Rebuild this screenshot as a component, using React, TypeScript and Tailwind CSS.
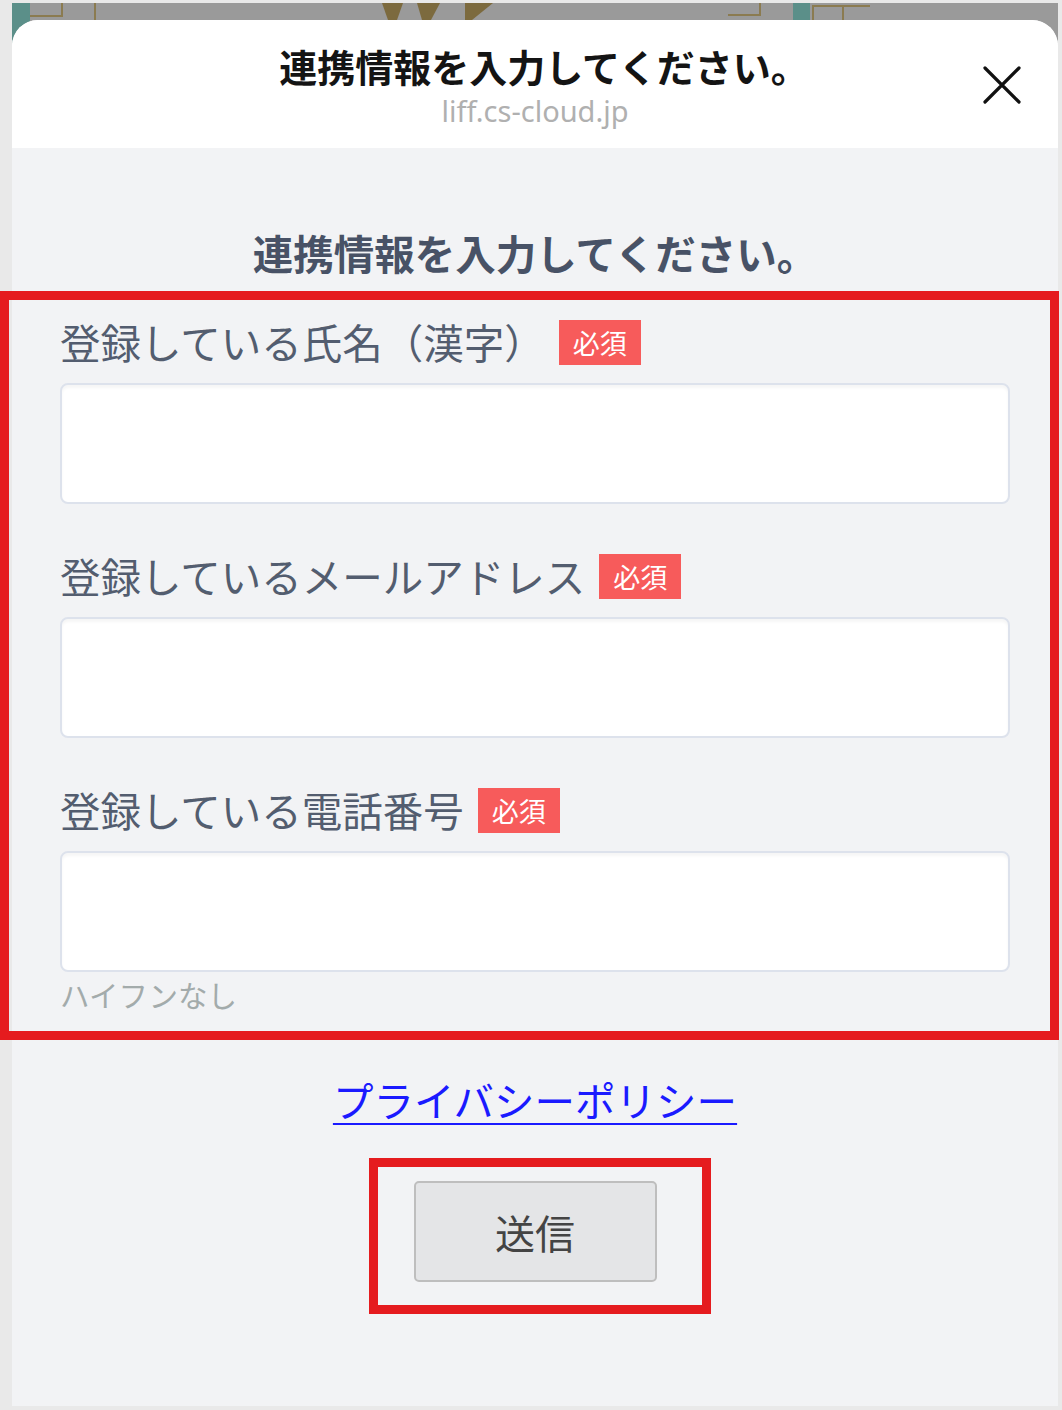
import React from 'react';

const jp = { fontFamily: '"Noto Sans CJK JP", "Noto Sans", sans-serif' };

const Badge: React.FC = () => (
  <span className="ml-[14px] inline-flex h-[45px] w-[82px] items-center justify-center bg-[#f75b5b] text-[27px] leading-none text-white">
    必須
  </span>
);

const Field: React.FC<{ label: string; hint?: string; first?: boolean }> = ({ label, hint, first }) => (
  <div className={first ? 'mt-[42px]' : 'mt-[48px]'}>
    <div className="flex h-[48px] items-center">
      <span className="text-[40.5px] leading-[48px] text-[#535d6f]">{label}</span>
      <Badge />
    </div>
    <div className="mt-[17px] h-[121px] w-full rounded-[8px] border-2 border-[#dde2ec] bg-white shadow-[inset_0_3px_3px_rgba(0,0,0,0.04)]" />
    {hint && <div className="mt-[5px] text-[29.5px] leading-[34px] text-[#a3abab]">{hint}</div>}
  </div>
);

const TopStrip: React.FC = () => (
  <svg width="1046" height="40" viewBox="0 0 1046 40" className="block">
    <rect width="1046" height="40" fill="#9a9a9a" />
    <rect x="0" y="0" width="18" height="40" fill="#5b8f89" />
    <path d="M18 13H50V0" stroke="#8b7b50" strokeWidth="2" fill="none" />
    <path d="M83 0V40" stroke="#8b7b50" strokeWidth="2" />
    <path d="M370 0H391L385 17H376Z" fill="#7c6a3e" />
    <path d="M405 0H428L419 17H410Z" fill="#7c6a3e" />
    <path d="M453 0H481L460 17H453Z" fill="#7c6a3e" />
    <path d="M716 12H748V0" stroke="#8b7b50" strokeWidth="2" fill="none" />
    <rect x="781" y="0" width="17" height="40" fill="#5b8f89" />
    <path d="M801 40V3H858M831 3V17" stroke="#8b7b50" strokeWidth="2" fill="none" />
  </svg>
);

export default function App() {
  return (
    <div className="relative h-[1410px] w-[1062px] overflow-hidden bg-[#e9e9e9] pb-[4px] pl-[12px] pr-[4px] pt-[3px]" style={jp}>
      <div className="flex h-full flex-col">
        <TopStrip />
        <div className="relative -mt-[23px] flex flex-1 flex-col overflow-hidden rounded-t-[26px] bg-[#f2f3f5]">
          {/* header */}
          <div className="relative flex h-[128px] flex-col items-center bg-white pt-[24px]">
            <div className="pl-[18px] text-[38px] font-bold leading-[44px] text-[#141414]">連携情報を入力してください。</div>
            <div className="mt-[5px] text-[29px] leading-[36px] text-[#b0b0b0]" style={{ fontFamily: '"Noto Sans", sans-serif' }}>
              liff.cs-cloud.jp
            </div>
            <button className="absolute right-[37px] top-[46px] h-[38px] w-[38px]">
              <svg viewBox="0 0 38 38" width="38" height="38">
                <path d="M2 2L36 36M36 2L2 36" stroke="#111" strokeWidth="3.2" strokeLinecap="round" />
              </svg>
            </button>
          </div>

          {/* body */}
          <div className="flex flex-col px-[48px] pt-[82px]">
            <div className="text-center text-[40.5px] font-bold leading-[46px] text-[#485266]">連携情報を入力してください。</div>
            <Field label="登録している氏名（漢字）" first />
            <Field label="登録しているメールアドレス" />
            <Field label="登録している電話番号" hint="ハイフンなし" />

            <div className="mt-[65px] text-center">
              <a className="text-[40.5px] leading-[48px] text-[#1a1aff] underline decoration-2 underline-offset-[6px]">
                プライバシーポリシー
              </a>
            </div>

            <div className="mt-[57px] flex justify-center">
              <button className="h-[101px] w-[243px] rounded-[5px] border-2 border-[#bebebe] bg-[#e4e5e7] text-[40px] leading-none text-[#444]">
                送信
              </button>
            </div>
          </div>
        </div>
      </div>

      {/* annotation boxes */}
      <div className="pointer-events-none absolute left-0 top-[291px] h-[749px] w-[1059px] border-[9px] border-[#e51b1e]" />
      <div className="pointer-events-none absolute left-[369px] top-[1158px] h-[156px] w-[342px] border-[9px] border-[#e51b1e]" />
    </div>
  );
}
